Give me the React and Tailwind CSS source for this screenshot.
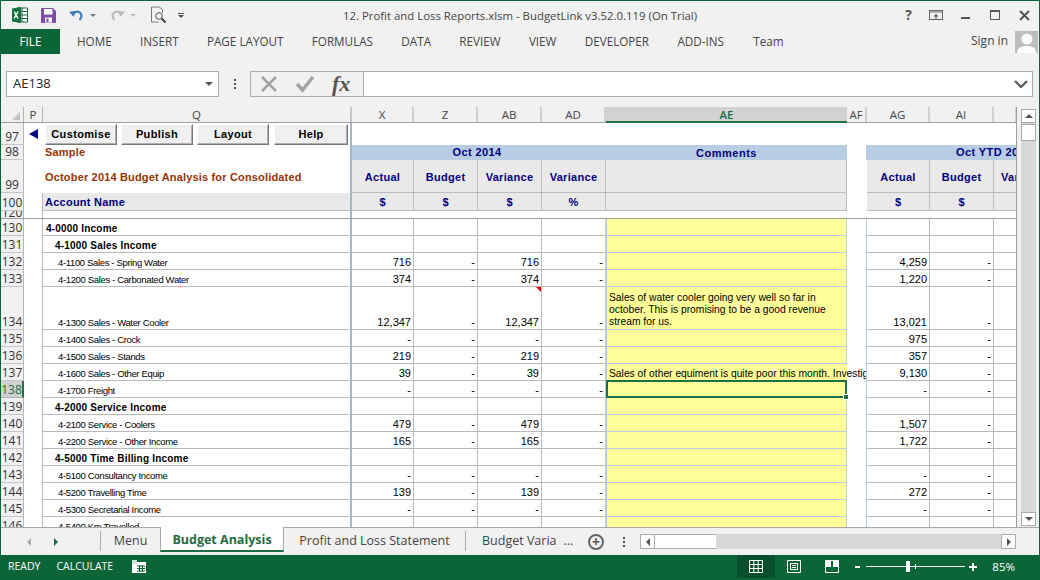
import React from "react";

// column widths of the scrolled part of the sheet
const colHeads = [
  { label: "X", w: "w-[62px]" },
  { label: "Z", w: "w-[64px]" },
  { label: "AB", w: "w-[64px]" },
  { label: "AD", w: "w-[64px]" },
  { label: "AE", w: "w-[241px]", active: true },
  { label: "AF", w: "w-[20px]" },
  { label: "AG", w: "w-[63px]" },
  { label: "AI", w: "w-[64px]" },
  { label: "", w: "w-[23px]" },
];

const rows = [
  { n: 130, label: "4-0000 Income", bold: true, indent: 0 },
  { n: 131, label: "4-1000 Sales Income", bold: true, indent: 1 },
  { n: 132, label: "4-1100 Sales - Spring Water", v: ["716", "-", "716", "-"], ytd: ["4,259", "-"] },
  { n: 133, label: "4-1200 Sales - Carbonated Water", v: ["374", "-", "374", "-"], ytd: ["1,220", "-"] },
  {
    n: 134,
    tall: true,
    label: "4-1300 Sales - Water Cooler",
    v: ["12,347", "-", "12,347", "-"],
    ytd: ["13,021", "-"],
    comment: "Sales of water cooler going very well so far in october. This is promising to be a good revenue stream for us.",
  },
  { n: 135, label: "4-1400 Sales - Crock", v: ["-", "-", "-", "-"], ytd: ["975", "-"] },
  { n: 136, label: "4-1500 Sales - Stands", v: ["219", "-", "219", "-"], ytd: ["357", "-"] },
  {
    n: 137,
    label: "4-1600 Sales - Other Equip",
    v: ["39", "-", "39", "-"],
    ytd: ["9,130", "-"],
    overflow: "Sales of other equiment is quite poor this month. Investiga",
  },
  { n: 138, label: "4-1700 Freight", v: ["-", "-", "-", "-"], ytd: ["-", "-"], selected: true },
  { n: 139, label: "4-2000 Service Income", bold: true, indent: 1 },
  { n: 140, label: "4-2100 Service - Coolers", v: ["479", "-", "479", "-"], ytd: ["1,507", "-"] },
  { n: 141, label: "4-2200 Service - Other Income", v: ["165", "-", "165", "-"], ytd: ["1,722", "-"] },
  { n: 142, label: "4-5000 Time Billing Income", bold: true, indent: 1 },
  { n: 143, label: "4-5100 Consultancy Income", v: ["-", "-", "-", "-"], ytd: ["-", "-"] },
  { n: 144, label: "4-5200 Travelling Time", v: ["139", "-", "139", "-"], ytd: ["272", "-"] },
  { n: 145, label: "4-5300 Secretarial Income", v: ["-", "-", "-", "-"], ytd: ["-", "-"] },
  { n: 146, label: "4-5400 Km Travelled", v: ["-", "-", "-", "-"], ytd: ["-", "-"] },
];

const RowHead = ({ n, h = "h-[17px]", selected }) => (
  <div
    className={`${h} w-[23px] shrink-0 flex items-end justify-center border-b font-['Open_Sans',sans-serif] text-[12px] leading-[14px] ${
      selected
        ? "bg-[#d2d2d2] text-[#1d6b45] border-[#b0b0b0] border-r-2 border-r-[#217346]"
        : "bg-[#f1f1f1] text-[#333] border-[#c6c6c6] border-r border-r-[#b5b5b5]"
    }`}
  >
    {n}
  </div>
);

const Num = ({ w, children }) => (
  <div className={`${w} shrink-0 h-full flex items-end justify-end pr-[2px] border-r border-b border-[#b9b9b9] text-[11px] leading-[14px] text-black`}>
    {children}
  </div>
);

const SheetRow = ({ row }) => {
  const h = row.tall ? "h-[43px]" : "h-[17px]";
  const v = row.v || ["", "", "", ""];
  const ytd = row.ytd || ["", ""];
  return (
    <div className={`${h} flex shrink-0`}>
      <RowHead n={row.n} h={h} selected={row.selected} />
      <div className="w-[19px] shrink-0 border-r border-[#b9b9b9]" />
      <div
        className={`w-[307px] shrink-0 flex items-end border-b border-[#b9b9b9] text-black leading-[13px] whitespace-nowrap ${
          row.bold ? "font-bold text-[10px] tracking-[0.2px]" : "text-[9.5px] tracking-[-0.35px] pl-[15px]"
        } ${row.indent === 1 ? "pl-[12px]" : ""} ${row.indent === 0 ? "pl-[3px]" : ""}`}
      >
        {row.label}
      </div>
      <div className="w-[2px] shrink-0 bg-[#a8b4c8]" />
      <Num w="w-[62px]">{v[0]}</Num>
      <Num w="w-[64px]">{v[1]}</Num>
      <div className="relative shrink-0">
        <Num w="w-[64px] h-full">{v[2]}</Num>
        {row.tall && (
          <div className="absolute top-0 right-px w-0 h-0 border-l-[5px] border-l-transparent border-t-[5px] border-t-[#f00000]" />
        )}
      </div>
      <Num w="w-[64px] border-r-[#b8cce4]">{v[3]}</Num>
      <div
        className={`relative w-[241px] shrink-0 bg-[#ffff99] border-b border-l border-[#b8cce4] ${
          row.overflow ? "" : "border-r"
        } flex items-end text-[10.300px] leading-[12px] text-black pl-[2px] pb-px`}
      >
        {row.comment && <div className="w-[226px]">{row.comment}</div>}
        {row.overflow && (
          <div className="absolute left-[2px] bottom-0 w-[257px] overflow-hidden whitespace-nowrap z-10">{row.overflow}</div>
        )}
        {row.selected && (
          <div className="absolute -left-px -top-px -right-px -bottom-px border-2 border-[#1f6f47] z-20">
            <div className="absolute -right-[4px] -bottom-[4px] w-[6px] h-[6px] bg-[#1f6f47] border border-white" />
          </div>
        )}
      </div>
      <div className="w-[20px] shrink-0 border-r border-[#b8cce4]" />
      <Num w="w-[63px]">{ytd[0]}</Num>
      <Num w="w-[64px]">{ytd[1]}</Num>
      <div className="w-[23px] shrink-0 border-b border-r border-[#b9b9b9]" />
    </div>
  );
};

const SheetButton = ({ w = "w-[72px]", children }) => (
  <button className={`${w} h-[21px] flex items-center justify-center bg-[#f0f0f0] text-[11px] font-bold tracking-[0.35px] text-black border border-[#fff] border-r-[#777] border-b-[#777] shadow-[inset_-1px_-1px_0_#b0b0b0]`}>
    {children}
  </button>
);

const ExcelLogo = () => (
  <svg width="18" height="18" viewBox="0 0 18 18">
    <path d="M6 2h10.500v14H6z" fill="#fff" stroke="#1d6b45" />
    <path d="M11 2v14M7 5.500h9M7 9h9M7 12.500h9" stroke="#1d6b45" />
    <path d="M1 2.500 10 1v16l-9-1.500z" fill="#16703f" />
    <path d="M3.300 5.500 5 9l-1.900 3.500M7.200 5.500 5 9l2 3.500" stroke="#fff" strokeWidth="1.400" fill="none" />
  </svg>
);

const SaveIcon = () => (
  <svg width="15" height="15" viewBox="0 0 15 15">
    <path d="M.5.500h11.500l2.500 2.500v11.500H.500z" fill="#7b4da6" stroke="#7b4da6" />
    <rect x="3" y="1" width="8.500" height="5.500" fill="#fff" />
    <rect x="4" y="9.500" width="7" height="5" fill="#fff" />
    <rect x="5.500" y="10.500" width="2" height="3.500" fill="#7b4da6" />
  </svg>
);

const UndoIcon = ({ color, flip }) => (
  <svg width="16" height="14" viewBox="0 0 16 14" className={flip ? "-scale-x-100" : ""}>
    <path d="M4 7.500c1-3.500 4-4.500 6-3.500 3 1.200 3.500 5 .5 8" fill="none" stroke={color} strokeWidth="2.200" />
    <path d="M.5 3.500l6.500 0-3 5.500z" fill={color} transform="rotate(-12 3 6)" />
  </svg>
);

const Caret = ({ color = "border-t-[#777]" }) => (
  <div className={`w-0 h-0 border-x-[3px] border-x-transparent border-t-[3px] ${color}`} />
);

const PreviewIcon = () => (
  <svg width="17" height="18" viewBox="0 0 17 18" fill="none">
    <path d="M1.500 1h8l3 3v3M1.500 1v15h7" stroke="#777" />
    <circle cx="9" cy="10" r="3.300" stroke="#555" />
    <path d="M11.500 12.500l4 4" stroke="#444" strokeWidth="2" />
  </svg>
);

const AvatarIcon = () => (
  <div className="w-[23px] h-[22px] bg-[#bdbdbd] overflow-hidden">
    <svg width="23" height="22" viewBox="0 0 23 22">
      <circle cx="12" cy="8" r="5.500" fill="#fff" />
      <path d="M2 22c0-5 4-7 10-7s9 2 9 7z" fill="#fff" />
    </svg>
  </div>
);

const ribbonTabs = ["HOME", "INSERT", "PAGE LAYOUT", "FORMULAS", "DATA", "REVIEW", "VIEW", "DEVELOPER", "ADD-INS"];

const App = () => {
  return (
    <div className="w-[1040px] h-[580px] overflow-hidden flex flex-col bg-[#f1f1f1] border-l border-t border-r border-[#0c6537] font-['Liberation_Sans',sans-serif]">
      {/* title bar */}
      <div className="h-[28px] shrink-0 relative flex items-center pl-[10px] font-['Open_Sans',sans-serif]">
        <ExcelLogo />
        <div className="ml-[12px]"><SaveIcon /></div>
        <div className="ml-[13px]"><UndoIcon color="#3f7cb8" /></div>
        <div className="ml-[5px]"><Caret /></div>
        <div className="ml-[13px]"><UndoIcon color="#bdbdbd" flip /></div>
        <div className="ml-[5px]"><Caret color="border-t-[#bbb]" /></div>
        <div className="ml-[14px]"><PreviewIcon /></div>
        <div className="ml-[11px] flex flex-col items-center gap-px">
          <div className="w-[6px] h-px bg-[#555]" />
          <Caret color="border-t-[#555]" />
        </div>
        <div className="absolute inset-x-0 top-[6px] text-center text-[11.400px] leading-[18px] text-[#444]">
          12. Profit and Loss Reports.xlsm - BudgetLink v3.52.0.119 (On Trial)
        </div>
        <div className="ml-auto flex items-center pr-[9px] text-[#555]">
          <span className="text-[14px] font-bold leading-none mr-[17px]">?</span>
          <svg width="15" height="11" viewBox="0 0 15 11" fill="none" className="mr-[17px]">
            <rect x=".5" y=".5" width="13" height="9" stroke="#666" />
            <path d="M1 2h12" stroke="#666" />
            <path d="M7 4l2.500 2.500h-5zM6.500 6h1v3h-1z" fill="#555" />
          </svg>
          <div className="w-[9px] h-[2px] bg-[#555] mr-[20px] mt-[5px]" />
          <div className="w-[10px] h-[10px] border border-[#555] border-t-2 mr-[19px]" />
          <svg width="11" height="11" viewBox="0 0 11 11">
            <path d="M1 1l9 9M10 1l-9 9" stroke="#555" strokeWidth="2" />
          </svg>
        </div>
      </div>

      {/* ribbon tabs */}
      <div className="h-[25px] shrink-0 flex items-center font-['Open_Sans',sans-serif] text-[11.700px] text-[#444]">
        <div className="w-[59px] h-full flex items-center justify-center bg-[#0c6537] text-white">FILE</div>
        <div className="flex ml-[17px] gap-[28.300px]">
          {ribbonTabs.map((t) => (
            <span key={t}>{t}</span>
          ))}
          <span className="ml-px">Team</span>
        </div>
        <div className="ml-auto flex items-center pr-px">
          <span className="mr-[7px] -mt-px text-[12px]">Sign in</span>
          <AvatarIcon />
        </div>
      </div>

      {/* formula bar */}
      <div className="h-[26px] mt-[17px] shrink-0 flex items-stretch pl-[5px] pr-[6px]">
        <div className="w-[213px] flex items-center justify-between pl-[6px] pr-[5px] bg-white border border-[#ababab] font-['Open_Sans',sans-serif] text-[13px] text-[#222]">
          AE138
          <div className="w-0 h-0 border-x-[4px] border-x-transparent border-t-[4px] border-t-[#555]" />
        </div>
        <div className="w-[31px] flex flex-col items-center justify-center gap-[2px]">
          <div className="w-[2px] h-[2px] bg-[#555]" />
          <div className="w-[2px] h-[2px] bg-[#555]" />
          <div className="w-[2px] h-[2px] bg-[#555]" />
        </div>
        <div className="w-[113px] flex items-center border border-r-0 border-[#ababab] pl-[9px]">
          <svg width="18" height="18" viewBox="0 0 18 18">
            <path d="M2 2l14 14M16 2L2 16" stroke="#a3a3a3" strokeWidth="2.500" />
          </svg>
          <svg width="20" height="18" viewBox="0 0 20 18" className="ml-[17px]">
            <path d="M2 9l5.500 6L18 2" stroke="#a3a3a3" strokeWidth="3.500" fill="none" />
          </svg>
          <span className="ml-[17px] font-['Liberation_Serif',serif] italic font-bold text-[22px] leading-none text-[#555]">fx</span>
        </div>
        <div className="flex-1 flex items-center justify-end pr-[4px] bg-white border border-[#ababab]">
          <svg width="14" height="9" viewBox="0 0 14 9">
            <path d="M1 1l6 6 6-6" stroke="#555" strokeWidth="2.200" fill="none" />
          </svg>
        </div>
      </div>

      {/* sheet */}
      <div className="h-[420px] mt-[10px] shrink-0 flex">
        <div className="w-[1016px] shrink-0 flex flex-col overflow-hidden bg-white border-r border-[#a0a0a0]">
          {/* column letters */}
          <div className="h-[16px] shrink-0 flex bg-[#f1f1f1] border-b border-[#9e9e9e] font-['Open_Sans',sans-serif] text-[11.500px] leading-[15px] text-[#444]">
            <div className="w-[23px] shrink-0 flex items-end justify-end pr-[3px] pb-[2px] border-r border-[#b5b5b5]">
              <div className="w-0 h-0 border-l-[8px] border-l-transparent border-b-[8px] border-b-[#c4c4c4]" />
            </div>
            <div className="w-[19px] shrink-0 text-center border-r border-[#b5b5b5]">P</div>
            <div className="w-[309px] shrink-0 text-center border-r-2 border-[#c6c6c6]">Q</div>
            {colHeads.map((c) => (
              <div
                key={c.label}
                className={`${c.w} shrink-0 text-center ${
                  c.active
                    ? "bg-[#d2d2d2] text-[#1d6b45] font-semibold border-b-2 border-[#217346] h-[16px]"
                    : "border-r-2 border-[#d0d0d0]"
                }`}
              >
                {c.label}
              </div>
            ))}
          </div>

          {/* frozen header rows */}
          <div className="h-[22px] shrink-0 flex">
            <RowHead n={97} h="h-[22px]" />
            <div className="w-[19px] shrink-0 flex items-center justify-center">
              <div className="w-0 h-0 border-y-[5px] border-y-transparent border-r-[9px] border-r-[#000080]" />
            </div>
            <div className="w-[307px] shrink-0 flex gap-[4px] pl-[2px] pt-px">
              <SheetButton>Customise</SheetButton>
              <SheetButton>Publish</SheetButton>
              <SheetButton>Layout</SheetButton>
              <SheetButton w="w-[74px] ml-px">Help</SheetButton>
            </div>
            <div className="w-[2px] shrink-0 bg-[#a8b4c8]" />
          </div>

          <div className="h-[15px] shrink-0 flex">
            <RowHead n={98} h="h-[15px]" />
            <div className="w-[19px] shrink-0" />
            <div className="w-[307px] shrink-0 pl-[2px] text-[11px] font-bold tracking-[0.2px] leading-[14px] text-[#993300]">Sample</div>
            <div className="w-[2px] shrink-0 bg-[#a8b4c8]" />
            <div className="w-[254px] shrink-0 pr-[4px] bg-[#b8cce4] text-center text-[11px] font-bold tracking-[0.4px] leading-[15px] text-[#000080]">Oct 2014</div>
            <div className="w-[241px] shrink-0 bg-[#b8cce4] text-center text-[11px] font-bold tracking-[0.5px] leading-[17px] text-[#000080]">Comments</div>
            <div className="w-[19px] shrink-0" />
            <div className="w-[151px] shrink-0 bg-[#b8cce4] pl-[90px] whitespace-nowrap text-[11px] font-bold tracking-[0.4px] leading-[15px] text-[#000080]">Oct YTD 20</div>
          </div>

          <div className="h-[33px] shrink-0 flex">
            <RowHead n={99} h="h-[33px]" />
            <div className="w-[19px] shrink-0" />
            <div className="w-[307px] shrink-0 pl-[2px] pt-[2px] flex items-center text-[11px] font-bold tracking-[0.17px] text-[#993300]">October 2014 Budget Analysis for Consolidated</div>
            <div className="w-[2px] shrink-0 bg-[#a8b4c8]" />
            {[
              ["w-[62px]", "Actual"],
              ["w-[64px]", "Budget"],
              ["w-[64px]", "Variance"],
              ["w-[64px]", "Variance"],
              ["w-[241px]", ""],
            ].map(([w, t], i) => (
              <div key={i} className={`${w} shrink-0 flex items-center justify-center pt-[2px] bg-[#e9e9e9] border-r border-b border-[#bdbdbd] text-[11px] font-bold tracking-[0.3px] text-[#000080]`}>
                {t}
              </div>
            ))}
            <div className="w-[20px] shrink-0" />
            {[
              ["w-[63px]", "Actual"],
              ["w-[64px]", "Budget"],
              ["w-[23px]", "Var"],
            ].map(([w, t], i) => (
              <div key={i} className={`${w} shrink-0 flex items-center pt-[2px] whitespace-nowrap bg-[#e9e9e9] border-r border-b border-[#bdbdbd] text-[11px] font-bold tracking-[0.3px] text-[#000080] ${t === "Var" ? "pl-[7px]" : "justify-center"}`}>
                {t}
              </div>
            ))}
          </div>

          <div className="h-[18px] shrink-0 flex">
            <RowHead n={100} h="h-[18px]" />
            <div className="w-[19px] shrink-0 border-r border-[#b9b9b9]" />
            <div className="w-[307px] shrink-0 pl-[2px] pt-px flex items-center bg-[#e9e9e9] border-b border-[#bdbdbd] text-[11px] font-bold tracking-[0.25px] text-[#000080]">Account Name</div>
            <div className="w-[2px] shrink-0 bg-[#a8b4c8]" />
            {[
              ["w-[62px]", "$"],
              ["w-[64px]", "$"],
              ["w-[64px]", "$"],
              ["w-[64px]", "%"],
              ["w-[241px]", ""],
            ].map(([w, t], i) => (
              <div key={i} className={`${w} shrink-0 flex items-center justify-center pt-px bg-[#e9e9e9] border-r border-b border-[#bdbdbd] text-[11px] font-bold text-[#000080]`}>
                {t}
              </div>
            ))}
            <div className="w-[20px] shrink-0" />
            {[
              ["w-[63px]", "$"],
              ["w-[64px]", "$"],
              ["w-[23px]", ""],
            ].map(([w, t], i) => (
              <div key={i} className={`${w} shrink-0 flex items-center justify-center pt-px bg-[#e9e9e9] border-r border-b border-[#bdbdbd] text-[11px] font-bold text-[#000080]`}>
                {t}
              </div>
            ))}
          </div>

          {/* hidden rows sliver + freeze line */}
          <div className="h-[8px] shrink-0 flex border-b border-[#9e9e9e] overflow-hidden">
            <div className="w-[23px] h-[7px] overflow-hidden shrink-0 bg-[#f1f1f1] border-r border-[#b5b5b5] text-center font-['Open_Sans',sans-serif] text-[12px] leading-[4px] text-[#333]">120</div>
            <div className="w-[19px] shrink-0 border-r border-[#b9b9b9]" />
            <div className="w-[307px] shrink-0" />
            <div className="w-[2px] shrink-0 bg-[#a8b4c8]" />
          </div>

          {rows.map((r) => (
            <SheetRow key={r.n} row={r} />
          ))}
        </div>

        {/* vertical scrollbar */}
        <div className="ml-[4px] w-[15px] mt-[2px] mb-px flex flex-col bg-[#d8d8d8]">
          <div className="h-[14px] flex items-center justify-center bg-white border border-[#ababab]">
            <div className="w-0 h-0 border-x-[4px] border-x-transparent border-b-[4px] border-b-[#555]" />
          </div>
          <div className="h-[17px] mt-px bg-white border border-[#ababab]" />
          <div className="flex-1" />
          <div className="h-[14px] flex items-center justify-center bg-white border border-[#ababab]">
            <div className="w-0 h-0 border-x-[4px] border-x-transparent border-t-[4px] border-t-[#555]" />
          </div>
        </div>
      </div>

      {/* sheet tabs */}
      <div className="h-[28px] shrink-0 flex border-t border-[#a8a8a8] font-['Open_Sans',sans-serif] text-[12.500px] text-[#444]">
        <div className="w-[99px] shrink-0 flex items-center pl-[26px] gap-[23px]">
          <div className="w-0 h-0 border-y-[4px] border-y-transparent border-r-[4px] border-r-[#aaa]" />
          <div className="w-0 h-0 border-y-[4px] border-y-transparent border-l-[4px] border-l-[#1d6b45]" />
        </div>
        <div className="w-[60px] shrink-0 h-[20px] mt-[3px] flex items-center justify-center border-l border-[#ababab]">Menu</div>
        <div className="w-[124px] shrink-0 h-[25px] -mt-px pt-[3px] flex items-center justify-center bg-white border-x border-[#a8a8a8] border-b-2 border-b-[#1d6b45] font-bold text-[#1d6b45]">Budget Analysis</div>
        <div className="w-[182px] shrink-0 h-[20px] mt-[3px] flex items-center justify-center border-r border-[#ababab]">Profit and Loss Statement</div>
        <div className="w-[110px] shrink-0 h-[20px] mt-[3px] flex items-center pl-[16px] whitespace-nowrap">Budget Varia<span className="ml-[7px]">...</span></div>
        <div className="w-[22px] shrink-0 flex items-center ml-[12px]">
          <div className="w-[16px] h-[16px] rounded-full border-2 border-[#666] flex items-center justify-center text-[14px] font-bold leading-none text-[#555]">+</div>
        </div>
        <div className="w-[17px] shrink-0 flex flex-col items-center justify-center gap-[2px] ml-[5px]">
          <div className="w-[2px] h-[2px] bg-[#555]" />
          <div className="w-[2px] h-[2px] bg-[#555]" />
          <div className="w-[2px] h-[2px] bg-[#555]" />
        </div>
        <div className="w-[376px] h-[15px] mt-[6px] ml-[8px] flex bg-[#d8d8d8]">
          <div className="w-[15px] flex items-center justify-center bg-white border border-[#ababab]">
            <div className="w-0 h-0 border-y-[4px] border-y-transparent border-r-[4px] border-r-[#555]" />
          </div>
          <div className="w-[61px] bg-white border-y border-[#ababab]" />
          <div className="flex-1" />
          <div className="w-[15px] flex items-center justify-center bg-white border border-[#ababab]">
            <div className="w-0 h-0 border-y-[4px] border-y-transparent border-l-[4px] border-l-[#555]" />
          </div>
        </div>
      </div>

      {/* status bar */}
      <div className="flex-1 flex items-stretch pb-[2px] bg-[#0c6537] text-white font-['Open_Sans',sans-serif] text-[10.500px]">
        <div className="flex items-center pl-[7px]">
          <span>READY</span>
          <span className="ml-[16px]">CALCULATE</span>
          <svg width="15" height="13" viewBox="0 0 15 13" className="ml-[19px]">
            <rect x="0" y="2" width="14" height="11" fill="#fff" />
            <rect x="0" y="0" width="5" height="4" fill="#cfe3d8" />
            <path d="M5 6h8M5 8.500h8M5 11h8M7.500 5v7M10.500 5v7" stroke="#0c6537" />
          </svg>
        </div>
        <div className="ml-auto flex items-center pr-[24px]">
          <div className="w-[38px] h-full flex items-center justify-center bg-[#0a4f2b]">
            <svg width="14" height="13" viewBox="0 0 14 13" fill="none">
              <path d="M.5.500h13v12H.500zM.5 4.500h13M.5 8.500h13M4.800.500v12M9.200.500v12" stroke="#fff" />
            </svg>
          </div>
          <svg width="14" height="13" viewBox="0 0 14 13" fill="none" className="ml-[12px]">
            <path d="M.5.500h13v12H.500z" stroke="#fff" />
            <path d="M3.500 3.500h7v6h-7zM5 5.500h4M5 7.500h4" stroke="#fff" />
          </svg>
          <svg width="14" height="13" viewBox="0 0 14 13" fill="none" className="ml-[24px]">
            <path d="M.5.500h13v12H.500z" stroke="#fff" />
            <path d="M1 0h5v7H1zM8 0h5v7H8z" fill="#fff" />
          </svg>
          <div className="w-[5px] h-[2px] bg-white ml-[16px]" />
          <div className="relative w-[99px] h-px bg-white ml-[6px]">
            <div className="absolute left-[40px] -top-[5px] w-[4px] h-[11px] bg-white" />
            <div className="absolute left-[49px] -top-[2px] w-px h-[5px] bg-white" />
          </div>
          <div className="relative w-[8px] h-[2px] bg-white ml-[4px]">
            <div className="absolute left-[3px] -top-[3px] w-[2px] h-[8px] bg-white" />
          </div>
          <span className="ml-[15px] text-[11.500px]">85%</span>
        </div>
      </div>
    </div>
  );
};

export default App;
